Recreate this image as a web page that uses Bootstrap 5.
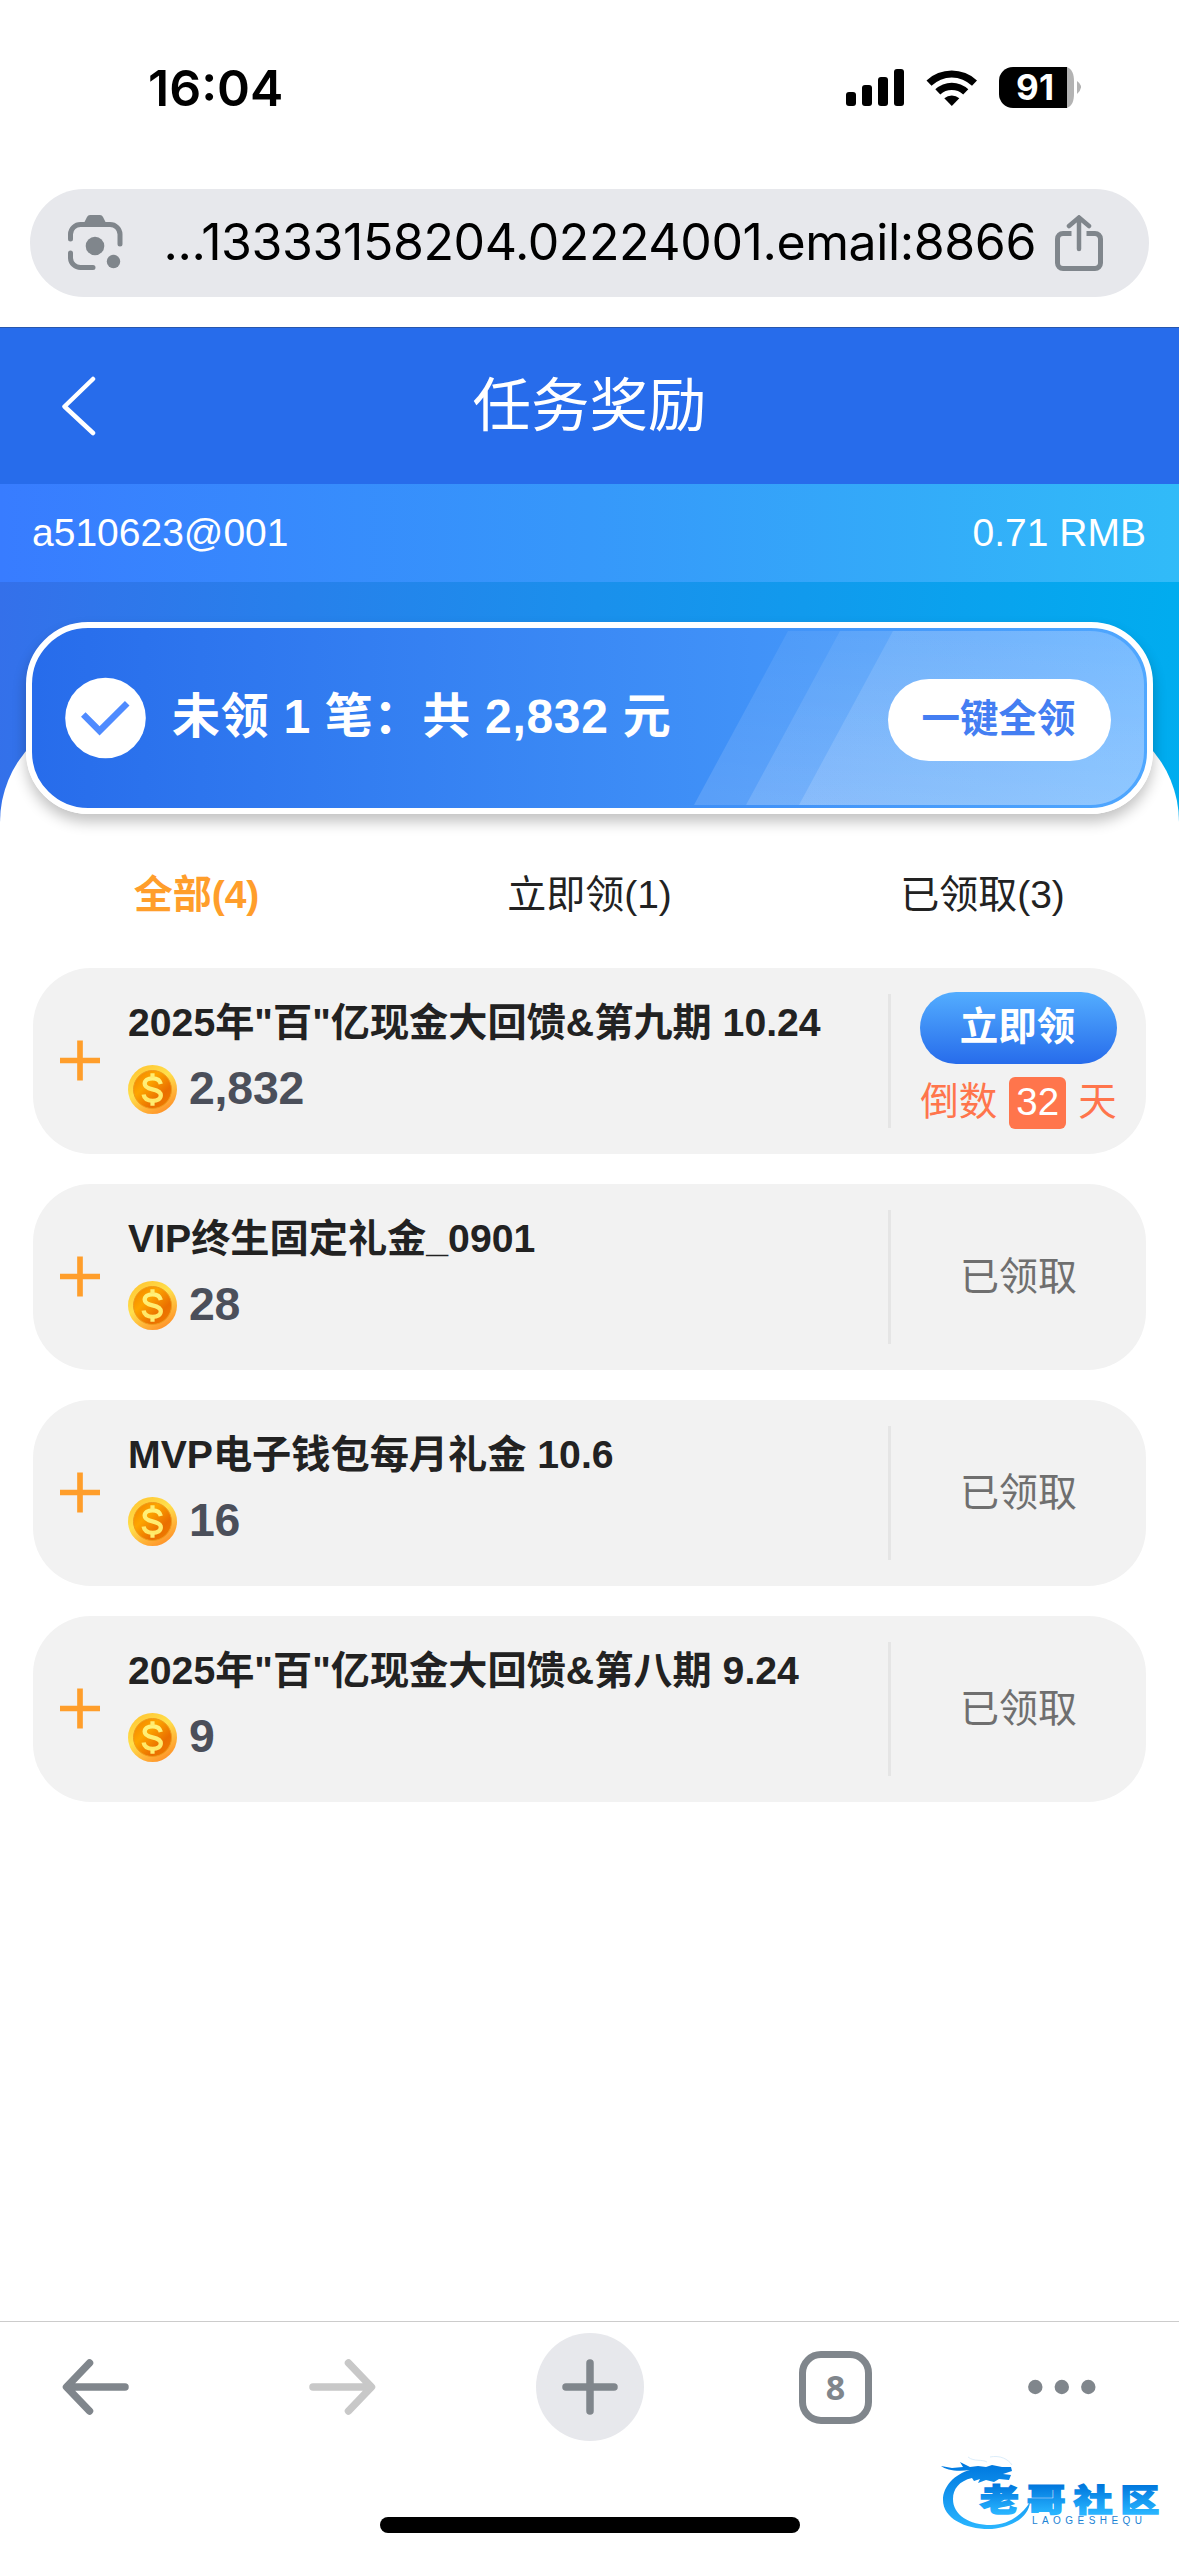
<!DOCTYPE html>
<html lang="zh-CN">
<head>
<meta charset="utf-8">
<meta name="viewport" content="width=device-width, initial-scale=1">
<title>任务奖励</title>
<link href="https://cdn.jsdelivr.net/npm/bootstrap@5.3.0/dist/css/bootstrap.min.css" rel="stylesheet">
<style>
  body { font-family: "Liberation Sans", "Noto Sans CJK SC", sans-serif; font-size: 39px; line-height: 1; color: #222; background: #fff; }
  svg { display: block; flex: none; }
  .phone { width: 1179px; height: 2556px; overflow: hidden; }
  .ui-font { font-family: Inter, sans-serif; color: #000; }
  .status { height: 189px; padding: 61px 98px 0 148px; }
  .clock { font-size: 50px; font-weight: 600; line-height: 54px; letter-spacing: 0; }
  .status-icons { margin-top: 6px; }
  .address { margin: 0 30px 30px; height: 108px; border-radius: 54px; background: #e7e8ec; padding: 0 46px 0 38px; }
  .url { font-size: 50px; letter-spacing: -.4px; white-space: nowrap; margin: 0 19px 3px auto; }
  .topbar { height: 157px; background: #276ceb; border-top: 1px solid #2757ae; display: grid; grid-template-columns: 1fr auto 1fr; }
  .topbar h1 { font-size: 58.5px; line-height: 1; font-weight: 400; }
  .account { height: 98px; background: linear-gradient(90deg, #387cff, #3698fa 50%, #31bbf8); padding: 0 33px 1px 32px; }
  .hero { height: 240px; background: linear-gradient(94deg, #3470ea, #1a90ec 50%, #00adef); padding: 40px 26px 0; position: relative; }
  .hero::before { content: ""; position: absolute; left: 0; right: 0; top: 130px; height: 112px; border-radius: 110px 110px 0 0 ; background: #fff; }
  .banner { height: 192px; border: 6px solid #fff; border-radius: 62px; background: linear-gradient(90deg, #276ceb, #4fa7ff); box-shadow: 0 8px 14px rgba(0,0,0,.24); position: relative; padding: 0 36px 0 33px; color: #fff; }
  .banner .rays { position: absolute; left: 0; top: 0; }
  .banner .front { position: relative; }
  .banner-text { font-size: 48px; font-weight: 700; letter-spacing: .7px; white-space: pre; margin: 0 0 3px 26px; }
  .claim-all { width: 223px; height: 82px; border-radius: 41px; background: #fff; color: #447ef2; font-weight: 700; font-size: 38.5px; border: 0; padding: 0 2px 1px 0; line-height: 1; margin-top: 4px; }
  .tabs { height: 146px; padding-top: 53px; }
  .tabs .active-tab { color: #ff9e2b; font-weight: 700; }
  .tasks { padding: 0 33px; gap: 30px; }
  .task { height: 186px; border-radius: 58px; background: #f2f2f2; padding: 0 0 1px 27px; }
  .task-main { padding: 33px 0 0 28px; }
  .task-title { font-size: 39.2px; font-weight: 700; line-height: 44px; white-space: nowrap; }
  .amount { font-size: 46.4px; font-weight: 700; color: #4b4f5a; line-height: 48px; padding-bottom: 2px; letter-spacing: -.2px; }
  .coin-row { margin-top: 19px; gap: 12px; }
  .split { width: 3px; height: 134px; background: #e5e5e5; }
  .action { width: 255px; color: #6f6f6f; padding-bottom: 1px; }
  .claim { width: 197px; height: 72px; border-radius: 36px; background: linear-gradient(#53adff, #276ceb); color: #fff; font-weight: 700; font-size: 38.5px; border: 0; padding: 0 2px 1px 0; line-height: 1; }
  .countdown { color: #ff754c; height: 52px; margin-top: 13px; gap: 12px; white-space: nowrap; font-size: 38.5px; }
  .days { background: #ff754c; color: #fff; border-radius: 6px; width: 57px; height: 52px; }
  .toolbar { border-top: 1px solid #ccc; height: 235px; padding: 11px 83px 0 62px; position: relative; }
  .new-tab { width: 108px; height: 108px; border-radius: 50%; background: #e7e8ec; margin-right: 155px; }
  .tool-back { margin-right: 180px; }
  .tool-forward { margin-right: 160px; }
  .tab-count { width: 73px; height: 73px; border: 7px solid #80868c; border-radius: 22px; color: #80868c; font: 700 34px "Open Sans", sans-serif; }
  .home { position: absolute; left: 380px; top: 195px; width: 420px; height: 16px; border-radius: 8px; background: #000; }
  .watermark { position: absolute; left: 930px; top: 125px; }
</style>
</head>
<body>
<div class="phone d-flex flex-column">
  <div class="status ui-font d-flex justify-content-between align-items-start">
    <div class="clock">16:04</div>
    <svg class="status-icons" width="235" height="41" viewBox="0 0 235 41">
      <rect x="0" y="25" width="10" height="14" rx="3"/><rect x="16" y="18" width="10" height="21" rx="3"/><rect x="32" y="10" width="10" height="29" rx="3"/><rect x="48" y="2" width="10" height="37" rx="3"/>
      <path d="M80.500 13.500A37 37 0 0 1 131 13.500L126 18.800A29 29 0 0 0 85.500 18.800Z"/>
      <path d="M89.300 22.300A24 24 0 0 1 122.300 22.300L117.200 27.400A17 17 0 0 0 94.300 27.400Z"/>
      <path d="M98.300 31.200A11.500 11.500 0 0 1 113.300 31.200L105.800 39Z"/>
      <path d="M167 0h54v41h-54a14 14 0 0 1-14-14V14a14 14 0 0 1 14-14Z"/>
      <path d="M221 0c5 2 7 7 7 14v13c0 7-2 12-7 14Z" fill="#b3b3b3"/><path d="M231 14q4.500 3 4 6.500t-4 6.500Z" fill="#b3b3b3"/>
      <text x="189" y="33.200" text-anchor="middle" font-size="35" font-weight="700" fill="#fff" font-family="Inter" textLength="38">91</text>
    </svg>
  </div>
  <div class="address ui-font d-flex align-items-center justify-content-between">
    <svg width="55" height="56" viewBox="0 0 55 56" fill="none" stroke="#80868c" stroke-width="5" stroke-linecap="round">
      <path d="M2.500 24V19A10 10 0 0 1 12.500 9.500H42A10 10 0 0 1 52 19V29M2.500 38V43A10 10 0 0 0 12.500 52.500H25"/>
      <path d="M15.500 9L19 2Q20 0 22 0H32Q34 0 35 2L38.500 9Z" fill="#80868c" stroke="none"/>
      <circle cx="27" cy="31" r="9.300" fill="#80868c" stroke="none"/><circle cx="45.500" cy="46.500" r="6.700" fill="#80868c" stroke="none"/>
    </svg>
    <div class="url">...13333158204.02224001.email:8866</div>
    <svg width="48" height="57" viewBox="0 0 48 57" fill="none" stroke="#80868c" stroke-width="5">
      <path d="M16.500 18.500H8A5.500 5.500 0 0 0 2.500 24V48A5.500 5.500 0 0 0 8 53.500H40A5.500 5.500 0 0 0 45.500 48V24A5.500 5.500 0 0 0 40 18.500H31.500"/>
      <path d="M24 34V3M14 11L24 2.500L34 11" stroke-linecap="round" stroke-width="4.500"/>
    </svg>
  </div>

  <header class="topbar align-items-center text-white">
    <svg width="100" height="60" viewBox="0 0 100 60" fill="none" stroke="#fff" stroke-width="4.500" stroke-linecap="round" stroke-linejoin="round"><path d="M93 3L64.500 30.500L93 57"/></svg>
    <h1 class="mb-0">任务奖励</h1>
    <span></span>
  </header>
  <div class="account d-flex justify-content-between align-items-center text-white">
    <span>a510623@001</span><span>0.71 RMB</span>
  </div>

  <section class="hero">
    <div class="banner d-flex align-items-center justify-content-between">
      <svg class="rays" width="1115" height="180" viewBox="0 0 1115 180">
        <defs><linearGradient id="ray" x1="0" y1="0" x2="0" y2="1"><stop offset="0" stop-color="#fff" stop-opacity=".07"/><stop offset="1" stop-color="#fff" stop-opacity=".14"/></linearGradient>
        <linearGradient id="glow" x1="0" y1="0" x2="0" y2="1"><stop offset="0" stop-color="#fff" stop-opacity=".11"/><stop offset="1" stop-color="#fff" stop-opacity=".15"/></linearGradient></defs>
        <path fill="url(#ray)" d="M756 3H1058A54 54 0 0 1 1112 57V123A54 54 0 0 1 1058 177H662Z"/>
        <path fill="url(#ray)" d="M808 3H1058A54 54 0 0 1 1112 57V123A54 54 0 0 1 1058 177H714Z"/>
        <path fill="url(#glow)" d="M861 3H1058A54 54 0 0 1 1112 57V123A54 54 0 0 1 1058 177H767Z"/>
      </svg>
      <div class="front d-flex align-items-center">
        <svg width="81" height="82" viewBox="0 0 82 82"><circle cx="41" cy="41" r="40.800" fill="#fff"/><path d="M18.500 37.500L35 54L63 26" fill="none" stroke="#4f8bff" stroke-width="6.500"/></svg>
        <div class="banner-text">未领 1 笔：共 2,832 元</div>
      </div>
      <button class="claim-all front">一键全领</button>
    </div>
  </section>

  <nav class="tabs row g-0 text-center">
    <div class="col active-tab">全部(4)</div><div class="col">立即领(1)</div><div class="col">已领取(3)</div>
  </nav>

  <svg width="0" height="0" class="position-absolute">
    <defs>
      <linearGradient id="rim" x1="0" y1="0" x2=".6" y2="1"><stop offset="0" stop-color="#ffa63a"/><stop offset=".15" stop-color="#ffc936"/><stop offset=".5" stop-color="#ffe04c"/><stop offset="1" stop-color="#ff982c"/></linearGradient>
      <linearGradient id="core" x1="0" y1="0" x2="1" y2="1"><stop offset="0" stop-color="#f08000"/><stop offset=".35" stop-color="#fda500"/><stop offset=".7" stop-color="#ea6f00"/><stop offset="1" stop-color="#f08000"/></linearGradient>
      <linearGradient id="dollar" x1="0" y1="0" x2="0" y2="1"><stop offset="0" stop-color="#fff27c"/><stop offset="1" stop-color="#ffe766"/></linearGradient>
      <symbol id="coin" viewBox="0 0 49 49">
        <circle cx="24.500" cy="24.500" r="24.500" fill="url(#rim)"/><circle cx="24.500" cy="24.500" r="19" fill="url(#core)" stroke="#ef9a1c" stroke-width="1"/>
        <path d="M32.800 19C32 15.300 29 13.300 24.500 13.300C19.800 13.300 16.700 15.300 16.700 18.700C16.700 22.200 20 23.300 24.500 24.300C29.500 25.400 32.800 26.800 32.800 30.300C32.800 33.800 29.400 35.800 24.700 35.800C19.700 35.800 16.300 33.800 15.600 29.500" fill="none" stroke="url(#dollar)" stroke-width="4.300"/>
        <path d="M24.500 8.300V13M24.500 36V40.700" stroke="#ffec70" stroke-width="4.200"/>
      </symbol>
      <symbol id="plus" viewBox="0 0 41 41"><path d="M0 20.500H41M20.500 0V41" stroke="#ff9e2b" stroke-width="5.800"/></symbol>
    </defs>
  </svg>

  <main class="tasks d-flex flex-column flex-grow-1">
    <article class="task d-flex align-items-center">
      <svg width="40" height="41"><use href="#plus"/></svg>
      <div class="task-main flex-grow-1 align-self-start">
        <div class="task-title">2025年"百"亿现金大回馈&amp;第九期 10.24</div>
        <div class="coin-row d-flex align-items-center"><svg width="49" height="49"><use href="#coin"/></svg><span class="amount">2,832</span></div>
      </div>
      <div class="split"></div>
      <div class="action d-flex flex-column align-items-center">
        <button class="claim">立即领</button>
        <div class="countdown d-flex align-items-center"><span>倒数</span><span class="days d-flex align-items-center justify-content-center">32</span><span>天</span></div>
      </div>
    </article>
    <article class="task d-flex align-items-center">
      <svg width="40" height="41"><use href="#plus"/></svg>
      <div class="task-main flex-grow-1 align-self-start">
        <div class="task-title">VIP终生固定礼金_0901</div>
        <div class="coin-row d-flex align-items-center"><svg width="49" height="49"><use href="#coin"/></svg><span class="amount">28</span></div>
      </div>
      <div class="split"></div>
      <div class="action text-center">已领取</div>
    </article>
    <article class="task d-flex align-items-center">
      <svg width="40" height="41"><use href="#plus"/></svg>
      <div class="task-main flex-grow-1 align-self-start">
        <div class="task-title">MVP电子钱包每月礼金 10.6</div>
        <div class="coin-row d-flex align-items-center"><svg width="49" height="49"><use href="#coin"/></svg><span class="amount">16</span></div>
      </div>
      <div class="split"></div>
      <div class="action text-center">已领取</div>
    </article>
    <article class="task d-flex align-items-center">
      <svg width="40" height="41"><use href="#plus"/></svg>
      <div class="task-main flex-grow-1 align-self-start">
        <div class="task-title">2025年"百"亿现金大回馈&amp;第八期 9.24</div>
        <div class="coin-row d-flex align-items-center"><svg width="49" height="49"><use href="#coin"/></svg><span class="amount">9</span></div>
      </div>
      <div class="split"></div>
      <div class="action text-center">已领取</div>
    </article>
  </main>

  <footer class="toolbar">
    <div class="d-flex align-items-center">
      <svg class="tool-back" width="67" height="56" viewBox="0 0 67 56" fill="none" stroke="#80868c" stroke-width="7.500" stroke-linecap="round" stroke-linejoin="round"><path d="M27.500 4L4.500 28L27.500 52M6 28H63"/></svg>
      <svg class="tool-forward" width="67" height="56" viewBox="0 0 67 56" fill="none" stroke="#c8c8c8" stroke-width="7.500" stroke-linecap="round" stroke-linejoin="round"><path d="M39.500 4L62.500 28L39.500 52M61 28H4"/></svg>
      <div class="new-tab d-flex align-items-center justify-content-center"><svg width="56" height="56" viewBox="0 0 56 56" stroke="#80868c" stroke-width="7.500" stroke-linecap="round"><path d="M4 28H52M28 4V52"/></svg></div>
      <div class="tab-count d-flex align-items-center justify-content-center">8</div>
      <svg class="ms-auto" width="68" height="16" viewBox="0 0 68 16" fill="#80868c"><circle cx="7.300" cy="8" r="7.200"/><circle cx="33.800" cy="8" r="7.200"/><circle cx="60.300" cy="8" r="7.200"/></svg>
    </div>
    <div class="home"></div>
    <svg class="watermark" width="249" height="100" viewBox="0 0 249 100">
      <defs><linearGradient id="wm" gradientUnits="userSpaceOnUse" x1="0" y1="18" x2="0" y2="82"><stop offset="0" stop-color="#0079e0"/><stop offset="1" stop-color="#2ab6ff"/></linearGradient>
      <linearGradient id="wt" gradientUnits="userSpaceOnUse" x1="0" y1="38" x2="0" y2="66"><stop offset="0" stop-color="#0077dd"/><stop offset="1" stop-color="#28b4ff"/></linearGradient></defs>
      <path fill="url(#wm)" d="M40 23C25 27 13 39 13 53C13 72 37 83 62 82C84 80 99 69 100 55C92 68 78 78 61 78C39 78 23 68 23 52C23 42 29 34 42 31L44 34L50 32L48 36L56 33L64 35L69 32L79 33L81 28L73 27L82 24L81 20L72 20L62 18L56 20L48 19L40 20L30 15L33 20L22 21L11 19C16 23 27 25 40 23Z"/>
      <path d="M38 10C44 15 52 12 57 15M60 10C70 8 78 12 82 18" fill="none" stroke="#dcedfa" stroke-width="1"/>
      <text x="0" y="64" font-family="Noto Sans CJK SC" font-size="31" font-weight="900" letter-spacing="6.500" fill="url(#wt)" stroke="url(#wt)" stroke-width="1.500" transform="translate(50,0) scale(1.250,1)">老哥社区</text>
      <text x="102" y="76.500" font-family="Liberation Sans" font-size="10" fill="#1c83d4" textLength="110">LAOGESHEQU</text>
    </svg>
  </footer>
</div>
<script src="https://cdn.jsdelivr.net/npm/bootstrap@5.3.0/dist/js/bootstrap.bundle.min.js"></script>
</body>
</html>
